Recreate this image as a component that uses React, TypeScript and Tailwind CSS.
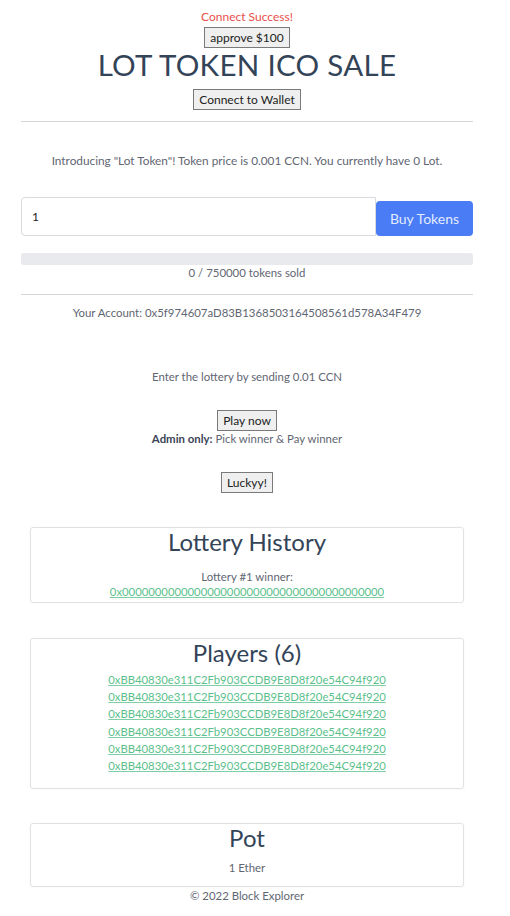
const players = Array.from({ length: 6 }, () => '0xBB40830e311C2Fb903CCDB9E8D8f20e54C94f920')

function OldButton({ children, className = '' }: { children: React.ReactNode; className?: string }) {
  return (
    <button
      className={`h-[21px] px-[5px] border border-[#7a7a7a] bg-[#efefef] text-[12px] leading-none text-[#222] ${className}`}
    >
      {children}
    </button>
  )
}

function Card({ children, className = '' }: { children: React.ReactNode; className?: string }) {
  return (
    <div className={`mx-[9px] border border-[#e2e2e2] rounded-[3px] shadow-[0_0_2px_rgba(0,0,0,0.06)] ${className}`}>
      {children}
    </div>
  )
}

export default function App() {
  return (
    <div className="w-[494px] bg-white text-center text-[#5f6672] font-['Lato','Noto_Sans',sans-serif]">
      <div className="px-[21px]">
        <p className="pt-[10px] text-[12px] leading-[14px] text-[#e8504c]">Connect Success!</p>
        <div className="mt-[3px] flex justify-center">
          <OldButton className="h-[19px]">approve $100</OldButton>
        </div>
        <h1 className="text-[29.5px] leading-[33px] text-[#334458] tracking-[0.3px]">LOT TOKEN ICO SALE</h1>
        <div className="mt-[8px] flex justify-center">
          <OldButton>Connect to Wallet</OldButton>
        </div>
        <hr className="mt-[11px] border-t border-[#d4d6d9]" />

        <p className="mt-[32px] text-[11.8px] leading-[14px]">
          Introducing "Lot Token"! Token price is 0.001 CCN. You currently have 0 Lot.
        </p>

        <div className="mt-[29px] flex items-end">
          <input
            defaultValue="1"
            className="flex-1 h-[39px] px-[10px] border border-[#d7dadf] rounded-l-[4px] text-[12px] text-[#222] outline-none"
          />
          <button className="w-[97px] h-[35px] bg-[#4a7cf6] rounded-[4px] text-[14px] text-[#e3ebfe]">Buy Tokens</button>
        </div>

        <div className="mt-[17px] h-[12px] rounded-[3px] bg-[#e8eaed]" />
        <p className="mt-[1px] text-[11.4px] leading-[14px]">0 / 750000 tokens sold</p>
        <hr className="mt-[14px] border-t border-[#d4d6d9]" />
        <p className="mt-[11px] text-[11.4px] leading-[14px]">Your Account: 0x5f974607aD83B1368503164508561d578A34F479</p>

        <p className="mt-[50px] text-[11.4px] leading-[14px]">Enter the lottery by sending 0.01 CCN</p>
        <div className="mt-[26px] flex justify-center">
          <OldButton>Play now</OldButton>
        </div>
        <p className="mt-[1px] text-[11.4px] leading-[14px]">
          <b className="font-bold text-[#3b4556]">Admin only:</b> Pick winner &amp; Pay winner
        </p>
        <div className="mt-[26px] flex justify-center">
          <OldButton>Luckyy!</OldButton>
        </div>

        <Card className="mt-[34px] h-[76px]">
          <h2 className="text-[24px] leading-[28px] text-[#334458]">Lottery History</h2>
          <p className="mt-[14px] text-[11.4px] leading-[14px]">Lottery #1 winner:</p>
          <a href="#" className="block text-[11.3px] leading-[16px] text-[#5bbf8c] underline decoration-[#7fcfa6]">
            0x0000000000000000000000000000000000000000
          </a>
        </Card>

        <Card className="mt-[35px] h-[151px]">
          <h2 className="text-[24px] leading-[28px] text-[#334458]">Players (6)</h2>
          <div className="mt-[4px]">
            {players.map((p, i) => (
              <a key={i} href="#" className="block text-[11.3px] leading-[17.2px] text-[#5bbf8c] underline decoration-[#7fcfa6]">
                {p}
              </a>
            ))}
          </div>
        </Card>

        <Card className="mt-[34px] h-[64px]">
          <h2 className="text-[24px] leading-[28px] text-[#334458]">Pot</h2>
          <p className="mt-[9px] text-[11.4px] leading-[14px]">1 Ether</p>
        </Card>
        <p className="mt-[2px] text-[11.4px] leading-[14px]">© 2022 Block Explorer</p>
      </div>
    </div>
  )
}
